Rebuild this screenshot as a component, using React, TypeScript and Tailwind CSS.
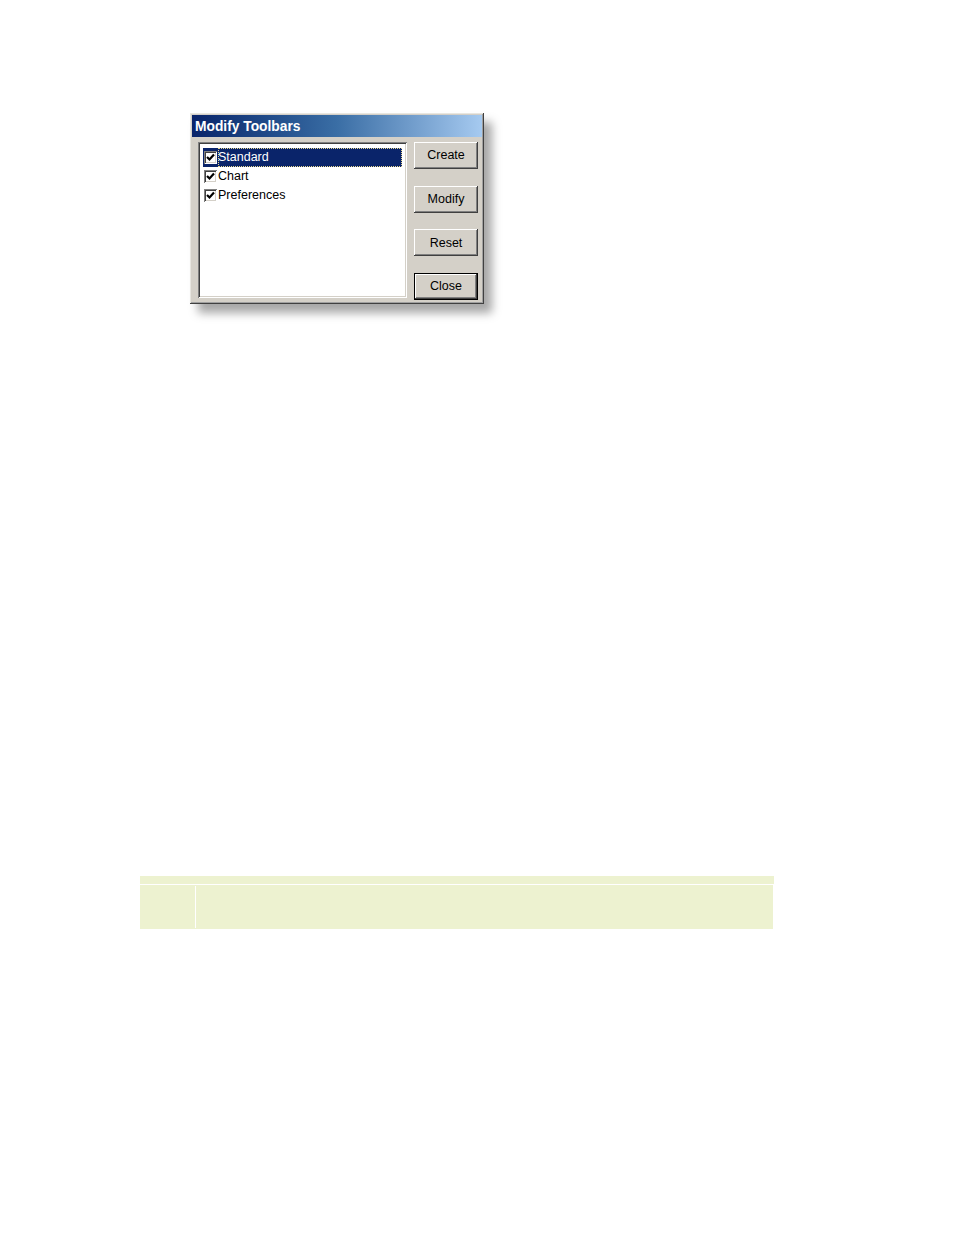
const raised =
  "shadow-[inset_-1px_-1px_#404040,inset_1px_1px_#ffffff,inset_-2px_-2px_#808080,inset_2px_2px_#d4d0c8]";
const sunken =
  "shadow-[inset_1px_1px_#808080,inset_-1px_-1px_#ffffff,inset_2px_2px_#404040,inset_-2px_-2px_#d4d0c8]";

function CheckBox() {
  return (
    <span className={`flex h-[13px] w-[13px] shrink-0 items-center justify-center bg-white ${sunken}`}>
      <svg width="9" height="9" viewBox="0 0 9 9">
        <polyline points="1,4 3.5,6.5 8,1.5" fill="none" stroke="#000" strokeWidth="2.2" />
      </svg>
    </span>
  );
}

function WinButton({ label, isDefault }: { label: string; isDefault?: boolean }) {
  return (
    <button
      className={`flex h-[27px] w-[64px] items-center justify-center bg-[#d4d0c8] text-[12.5px] text-black ${
        isDefault ? "border border-black" : ""
      } ${raised}`}
    >
      {label}
    </button>
  );
}

const items = ["Standard", "Chart", "Preferences"];

export default function App() {
  return (
    <div className="min-h-[1235px] w-[954px] bg-white font-['Liberation_Sans',Arial,sans-serif]">
      <div className="pl-[190px] pt-[113px]">
        <div
          className={`flex h-[191px] w-[294px] flex-col bg-[#d4d0c8] p-[2px] shadow-[inset_-1px_-1px_#404040,inset_1px_1px_#e8e6e0,inset_-2px_-2px_#a0a0a0,8px_9px_9px_rgba(0,0,0,0.35)]`}
        >
          <div className="flex h-[22px] shrink-0 items-center overflow-hidden bg-gradient-to-r from-[#0a246a] via-[#3a6ea5] to-[#a6caf0] pl-[3px] pt-[1px] text-[13.8px] leading-[16px] font-bold text-white">
            Modify Toolbars
          </div>
          <div className="flex flex-1 pl-[6px] pr-[4px] pt-[5px] pb-[4px]">
            <div className={`flex h-[156px] w-[209px] flex-col bg-white p-[5px] pt-[6px] ${sunken}`}>
              {items.map((item, i) => (
                <div
                  key={item}
                  className={`flex h-[19px] items-center gap-[1px] ${i === 0 ? "bg-[#0a246a] text-white" : "text-black"}`}
                >
                  <span className="pl-[1px]">
                    <CheckBox />
                  </span>
                  <span
                    className={`flex h-full flex-1 items-center text-[12.5px] ${
                      i === 0 ? "outline outline-1 outline-dotted outline-[#e8d890] -outline-offset-1" : ""
                    }`}
                  >
                    {item}
                  </span>
                </div>
              ))}
            </div>
            <div className="ml-[7px] flex flex-col gap-[16.7px]">
              <WinButton label="Create" />
              <WinButton label="Modify" />
              <WinButton label="Reset" />
              <WinButton label="Close" isDefault />
            </div>
          </div>
        </div>
      </div>

      <div className="ml-[140px] mt-[572px] w-[634px]">
        <div className="h-[8px] bg-[#edf2d0]" />
        <div className="mt-[1px] flex h-[44px] w-[633px] bg-[#edf2d0]">
          <div className="w-[55px]" />
          <div className="my-[1px] w-[1px] bg-white" />
          <div className="flex-1" />
        </div>
      </div>
    </div>
  );
}
